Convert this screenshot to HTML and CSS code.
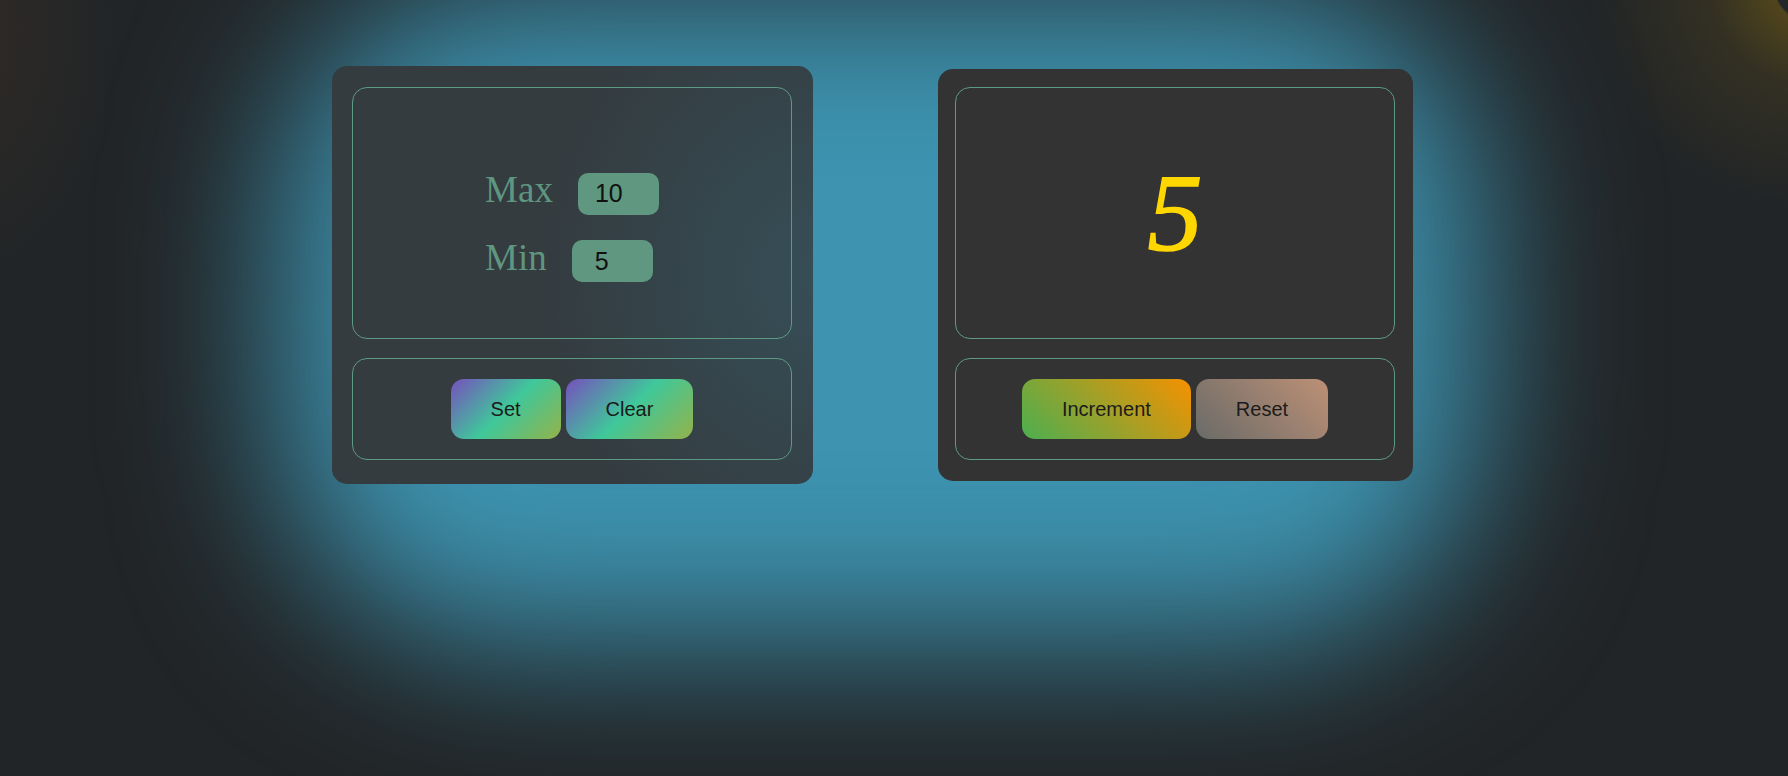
FILE: index.html
```html
<!DOCTYPE html>
<html lang="en">
<head>
<meta charset="utf-8">
<title>Counter</title>
<link rel="stylesheet" href="styles.css">
</head>
<body>
<div class="stage">
  <section class="card card--config">
    <div class="panel panel--fields">
      <div class="fields">
        <div class="field">
          <label class="field-label" for="max">Max</label>
          <input id="max" class="field-input field-input--max" type="text" value="10">
        </div>
        <div class="field">
          <label class="field-label" for="min">Min</label>
          <input id="min" class="field-input field-input--min" type="text" value="5">
        </div>
      </div>
    </div>
    <div class="panel panel--actions">
      <button class="btn btn--set">Set</button>
      <button class="btn btn--clear">Clear</button>
    </div>
  </section>
  <section class="card card--counter">
    <div class="panel panel--display">
      <span class="count">5</span>
    </div>
    <div class="panel panel--actions">
      <button class="btn btn--inc">Increment</button>
      <button class="btn btn--reset">Reset</button>
    </div>
  </section>
</div>
</body>
</html>
```
FILE: styles.css
```css
html, body {
  margin: 0;
  height: 100%;
}

body {
  overflow: hidden;
  font-family: "Liberation Sans", Arial, sans-serif;
  background:
    radial-gradient(circle at 1810px -15px, #24272a 0 35px, rgba(88, 74, 26, 0.85) 37px, rgba(72, 62, 30, 0.45) 100px, rgba(60, 50, 30, 0) 220px),
    radial-gradient(ellipse 150px 240px at -40px 30px, rgba(70, 50, 36, 0.4), rgba(70, 50, 36, 0) 100%),
    #222527;
}

.stage {
  position: relative;
  z-index: 0;
  display: flex;
  align-items: center;
  gap: 125px;
  padding: 66px 0 0 332px;
}

.stage::before {
  content: "";
  position: absolute;
  left: 280px;
  top: -10px;
  width: 1200px;
  height: 650px;
  background: #3d93b0;
  border-radius: 220px;
  filter: blur(80px);
  z-index: -1;
}

.card {
  display: flex;
  flex-direction: column;
  gap: 19px;
  background: #333333;
  border-radius: 15px;
}

.card--config {
  padding: 21px 21px 24px 20px;
  background:
    radial-gradient(ellipse 55% 75% at 100% 50%, rgba(62, 149, 179, 0.2), rgba(62, 149, 179, 0) 100%),
    #343c40;
}

.card--counter {
  padding: 18px 18px 21px 17px;
}

.panel {
  width: 440px;
  box-sizing: border-box;
  border: 1px solid #5d9a84;
  border-radius: 15px;
}

.panel--fields {
  height: 252px;
  padding-top: 80px;
  display: flex;
  justify-content: center;
  align-items: flex-start;
}

.fields {
  display: flex;
  flex-direction: column;
  gap: 21px;
}

.field {
  display: flex;
  align-items: baseline;
}

.field-label {
  font-family: "Liberation Serif", "Times New Roman", serif;
  font-size: 37px;
  color: #5e9680;
  margin-right: 25px;
}

.field-input {
  width: 81px;
  height: 42px;
  box-sizing: border-box;
  border: none;
  border-radius: 10px;
  background: #5f9780;
  font: 25px "Liberation Sans", Arial, sans-serif;
  color: #111111;
  padding: 0 0 0 17px;
  margin: 0;
  outline: none;
}

.field-input--min {
  padding-left: 23px;
}

.panel--display {
  height: 252px;
  display: flex;
  align-items: center;
  justify-content: center;
}

.count {
  font-family: "Liberation Serif", "Times New Roman", serif;
  font-style: italic;
  font-size: 110px;
  line-height: 1;
  color: #ffd700;
  -webkit-text-stroke: 1.5px #ffd700;
}

.panel--actions {
  height: 102px;
  display: flex;
  align-items: center;
  justify-content: center;
  gap: 5px;
}

.btn {
  height: 60px;
  padding: 0 40px;
  margin: 0;
  border: none;
  border-radius: 13px;
  font: 20px "Liberation Sans", Arial, sans-serif;
  color: #1b1b1b;
}

.btn--set,
.btn--clear {
  background: linear-gradient(135deg, #7650be 0%, #3fc89a 50%, #94b24a 100%);
}

.btn--inc {
  background: linear-gradient(45deg, #4caf50 0%, #f59100 100%);
}

.btn--reset {
  background: linear-gradient(45deg, #6a6b68 0%, #bd9076 100%);
}
```
